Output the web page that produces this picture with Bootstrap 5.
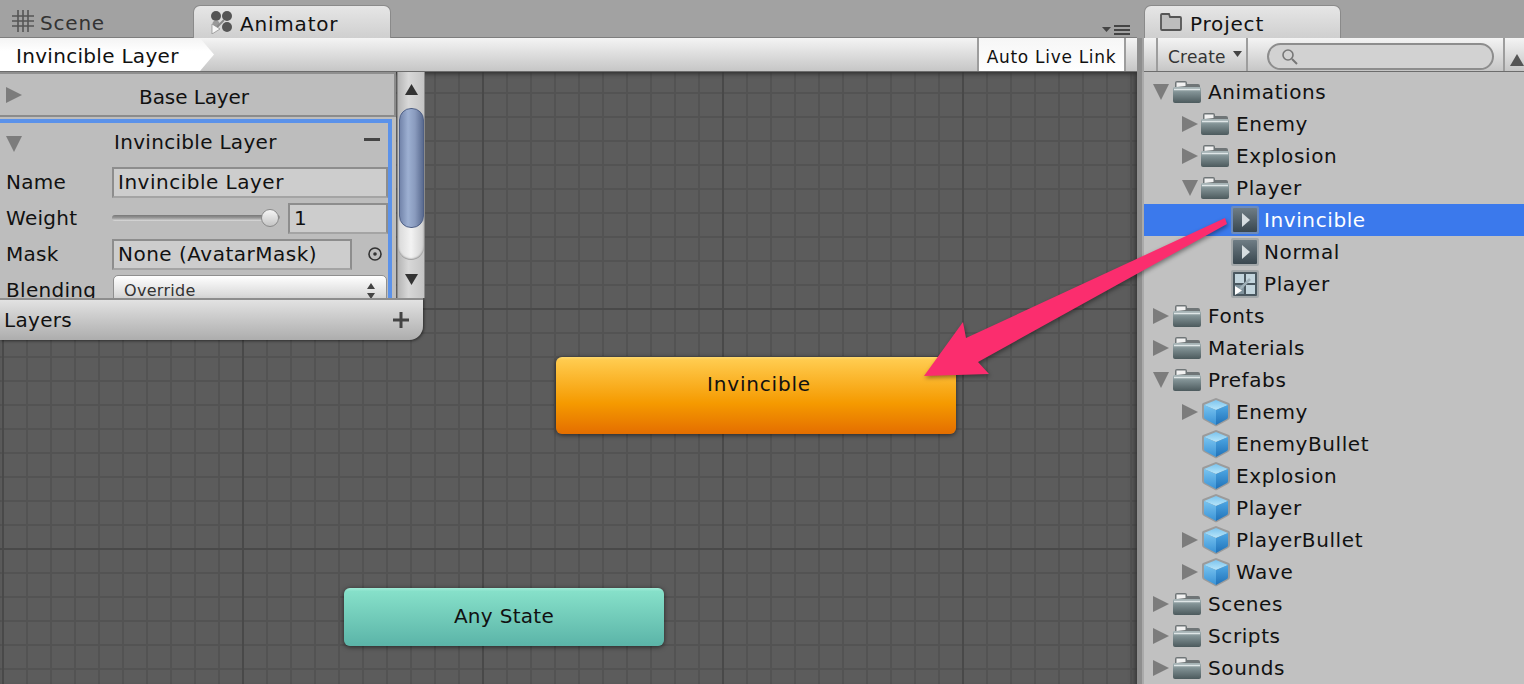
<!DOCTYPE html>
<html lang="en">
<head>
  <meta charset="UTF-8" />
  <title>Animator</title>
  <link href="https://cdn.jsdelivr.net/npm/bootstrap@5.3.0/dist/css/bootstrap.min.css" rel="stylesheet" />
  <style>
    html, body { height: 100%; margin: 0; overflow: hidden; }
    body {
      width: 1524px; height: 684px; background: #a2a2a2;
      font-family: "DejaVu Sans", "Liberation Sans", sans-serif;
      font-size: 20px; letter-spacing: .3px; color: #111; line-height: 1;
    }
    .main-pane { width: 1137px; height: 684px; }
    .gutter { width: 5px; height: 646px; margin-top: 38px; background: #8e8e8e; }
    .side-pane { width: 382px; height: 684px; }
    .tab-strip { height: 38px; padding-top: 5px; border-bottom: 1px solid #7e7e7e; }
    .side-tabs { padding-left: 2px; border-bottom: 0; }
    .tab-flat { width: 193px; padding-left: 12px; color: #333; gap: 6px; }
    .tab-on {
      height: 33px; background: linear-gradient(#e6e6e6, #cfcfcf);
      border: 1px solid #8a8a8a; border-bottom: 0; border-radius: 7px 7px 0 0;
      gap: 6px;
    }
    .tab-txt { margin-top: 3px; letter-spacing: .8px; }
    .tab-anim { width: 198px; padding-left: 16px; }
    .tab-proj { width: 197px; padding-left: 15px; gap: 8px; }
    .pane-menu { right: 7px; top: 25px; }
    .bar {
      height: 34px; background: linear-gradient(#f4f4f4, #c6c6c6);
      border-bottom: 1px solid #6c6c6c;
    }
    .crumb {
      width: 214px; height: 33px; padding: 2px 0 0 16px; background: linear-gradient(#f4f4f4, #fff 40%);
      clip-path: polygon(0 0, 200px 0, 214px 50%, 200px 100%, 0 100%);
    }
    .live-btn {
      width: 149px; height: 33px; margin-right: 11px; padding-top: 6px; font-size: 17px;
      letter-spacing: .7px; background: linear-gradient(#f6f6f6, #fff);
      border-left: 2px solid #9d9d9d; border-right: 2px solid #9d9d9d;
    }
    .canvas {
      height: 612px; position: relative; overflow: hidden;
      background-color: #5c5c5c;
      background-image:
        linear-gradient(90deg, #494949 2px, transparent 2px),
        linear-gradient(#494949 2px, transparent 2px),
        linear-gradient(90deg, #535353 2px, transparent 2px),
        linear-gradient(#535353 2px, transparent 2px);
      background-size: 240px 240px, 240px 240px, 24px 24px, 24px 24px;
      background-position: 2px 0, 0 -4px, 2px 0, 0 -4px;
      box-shadow: inset -8px 0 6px -6px #333, inset 0 5px 4px -3px #333;
    }
    .node {
      position: absolute; border-radius: 6px; box-shadow: 0 1px 5px rgba(0,0,0,.6);
    }
    .node-orange {
      left: 556px; top: 285px; width: 400px; height: 77px; padding: 0 0 24px 6px; letter-spacing: .8px;
      background: linear-gradient(#ffd96f 0, #ffcb4e 4%, #f59a00 60%, #e46e00 100%);
    }
    .node-teal {
      left: 344px; top: 516px; width: 320px; height: 58px; padding-bottom: 2px;
      background: linear-gradient(#a0ecd8 0, #86e0c9 6%, #5bb4a8 100%);
    }
    .layer-panel { position: absolute; left: 0; top: 0; width: 425px; height: 268px; }
    .layer-top { height: 226px; }
    .layer-list { width: 396px; background: #bdbdbd; }
    .base-row {
      height: 45px; padding: 4px 6px 0 0; letter-spacing: -.1px; position: relative;
      border-bottom: 2px solid #8b8b8b; border-top: 2px solid #8f8f8f;
      border-right: 2px solid #8b8b8b;
    }
    .tri-left { position: absolute; left: 6px; top: 13px; }
    .layer-open {
      height: 179px; margin-top: 2px; margin-right: 4px; overflow: hidden;
      border-top: 4px solid #5b92ea; border-right: 4px solid #5b92ea;
    }
    .layer-head { height: 41px; position: relative; padding: 0 0 4px 114px; }
    .minus-sign { position: absolute; left: 364px; top: 15px; width: 16px; height: 3px; background: #444; }
    .prop-row { height: 36px; padding-left: 6px; }
    .prop-label { width: 106px; }
    .value-box {
      height: 31px; padding-left: 4px; background: #cdcdcd;
      border: 2px solid #8d8d8d; border-bottom-color: #a4a4a4; letter-spacing: .5px;
    }
    .val-wide { width: 276px; }
    .val-num { width: 100px; margin-left: 8px; }
    .val-mask { width: 240px; }
    .slider-track {
      width: 168px; height: 6px; border-radius: 3px; position: relative;
      background: linear-gradient(#777, #999 50%, #ddd);
    }
    .slider-knob {
      position: absolute; right: 1px; top: -6px; width: 18px; height: 18px; border-radius: 50%;
      background: linear-gradient(#f5f5f5, #c4c4c4); border: 1px solid #8a8a8a;
    }
    .target-dot { margin-left: 15px; }
    .blend-label { margin-top: 8px; }
    .drop-box {
      width: 274px; height: 32px; margin: 3px 0 0 1px; padding: 0 10px; font-size: 16px; color: #333;
      background: linear-gradient(#fff, #ddd 60%, #bbb);
      border: 1px solid #8f8f8f; border-radius: 5px;
    }
    .scroll-col {
      width: 28px; margin-left: 1px; position: relative;
      background: linear-gradient(90deg, #b5b5b5, #d8d8d8 40%, #c4c4c4);
      border-left: 1px solid #8b8b8b; border-right: 1px solid #8b8b8b;
    }
    .scroll-track {
      position: absolute; left: 0; top: 36px; width: 26px; height: 152px; border-radius: 13px;
      background: linear-gradient(90deg, #d8d8d8, #f3f3f3 50%, #cfcfcf);
      box-shadow: inset 0 -1px 2px #888;
    }
    .scroll-thumb {
      position: absolute; left: 1px; top: 36px; width: 25px; height: 120px; border-radius: 12px;
      background: linear-gradient(90deg, #7385ab, #9db0d2 35%, #8a9bbe 65%, #5a6b90);
      border: 1px solid #4f6086;
    }
    .arrow-up, .arrow-down { position: absolute; left: 7px; }
    .arrow-up { top: 12px; }
    .arrow-down { top: 202px; }
    .layer-foot {
      height: 42px; width: 423px; padding: 0 14px 0 4px; border-top: 2px solid #8d8d8d;
      border-radius: 0 0 14px 0; background: linear-gradient(#e2e2e2, #adadad);
      box-shadow: 1px 1px 3px rgba(0,0,0,.5);
    }
    .side-bar { margin-left: 2px; padding-left: 12px; }
    .create-btn {
      width: 93px; height: 33px; padding: 6px 0 0 10px; gap: 7px; font-size: 17px; color: #333;
      border-left: 2px solid #9d9d9d; border-right: 2px solid #9d9d9d; letter-spacing: .2px;
    }
    .create-btn svg { margin-top: -8px; }
    .search-pill {
      width: 228px; height: 27px; margin: 4px 0 0 19px; padding-left: 12px;
      border: 2px solid #8d8d8d; border-radius: 14px; background: #d2d2d2;
    }
    .bar-end { margin-left: 9px; border-left: 2px solid #9d9d9d; height: 33px; padding: 10px 0 0 5px; }
    .tree {
      background: #c1c1c1; border-left: 2px solid #aaa; height: 612px; padding-top: 4px;
      letter-spacing: .6px;
    }
    .tree-row { height: 32px; white-space: nowrap; position: relative; }
    .tree-row svg.ico { flex: none; }
    .lvl0 { padding-left: 28px; }
    .lvl1 { padding-left: 56px; }
    .lvl1.has-cube { padding-left: 57px; }
    .lvl2 { padding-left: 87px; }
    .tree-row .lbl { margin-left: 6px; }
    .lvl2 .lbl { margin-left: 5px; }
    .has-cube .lbl { margin-left: 5px; }
    .tw { position: absolute; top: 8px; }
    .lvl0 .tw { left: 9px; }
    .lvl1 .tw { left: 38px; }
    .row-sel { background: #3b79ec; color: #fff; }
    .pink-arrow {
      position: absolute; left: 0; top: 0; pointer-events: none;
      filter: drop-shadow(1px 2px 2px rgba(0,0,0,.4));
    }
  </style>
</head>
<body>
  <svg width="0" height="0" class="position-absolute">
    <defs>
      <linearGradient id="fold-body" x1="0" y1="0" x2="0" y2="1">
        <stop offset="0" stop-color="#a9b6b8"/><stop offset=".35" stop-color="#7f8f92"/><stop offset="1" stop-color="#4c5a5d"/>
      </linearGradient>
      <linearGradient id="clip-body" x1="0" y1="0" x2="0" y2="1">
        <stop offset="0" stop-color="#6f7d85"/><stop offset="1" stop-color="#39474f"/>
      </linearGradient>
      <linearGradient id="cube-top" x1="0" y1="0" x2="0" y2="1">
        <stop offset="0" stop-color="#7cc4ee"/><stop offset="1" stop-color="#b9e6fa"/>
      </linearGradient>
      <linearGradient id="cube-left" x1="0" y1="0" x2="0" y2="1">
        <stop offset="0" stop-color="#79c4f0"/><stop offset="1" stop-color="#3a93d6"/>
      </linearGradient>
      <linearGradient id="cube-right" x1="0" y1="0" x2="0" y2="1">
        <stop offset="0" stop-color="#4da7e4"/><stop offset="1" stop-color="#2172b8"/>
      </linearGradient>
    </defs>
    <symbol id="folder" viewBox="0 0 30 24">
      <path d="M3 8 V3 Q3 1 5 1 H13 Q15 1 15 3 V4 H26 Q28 4 28 6 V8Z" fill="#6f7577"/>
      <path d="M4.500 7 V2.500 H13.500 V6 Z" fill="#f1f1f1"/>
      <path d="M1 8 Q1 7 3 7 H27 Q29 7 29 8 V21 Q29 23 27 23 H3 Q1 23 1 21Z" fill="url(#fold-body)"/>
      <path d="M2 9.500 H28" stroke="#dfe6e7" stroke-width="1.500"/>
    </symbol>
    <symbol id="cube" viewBox="0 0 30 30">
      <path d="M15 1 L28 6 Q29 6.500 29 8 V20 Q29 22 27 23 L16 29 Q15 29.500 14 29 L3 23 Q1 22 1 20 V8 Q1 6.500 2 6Z" fill="#9b9b9b"/>
      <path d="M15 3 L27 8 L15 13 L3 8Z" fill="url(#cube-top)"/>
      <path d="M3 8 L15 13 V28 L4 22 Q3 21.500 3 20Z" fill="url(#cube-left)"/>
      <path d="M27 8 L15 13 V28 L26 22 Q27 21.500 27 20Z" fill="url(#cube-right)"/>
    </symbol>
    <symbol id="clip" viewBox="0 0 28 28">
      <rect x="0" y="0" width="28" height="28" rx="2" fill="#8f979b" opacity=".6"/>
      <rect x="2" y="2" width="24" height="24" rx="1" fill="url(#clip-body)"/>
      <path d="M11 7 L19 14 L11 21Z" fill="#d6dde0"/>
    </symbol>
    <symbol id="ctrl" viewBox="0 0 28 28">
      <rect x="0" y="0" width="28" height="28" rx="2" fill="#8f979b" opacity=".6"/>
      <rect x="2" y="2" width="24" height="24" rx="1" fill="#4a5860"/>
      <rect x="4" y="4" width="9" height="9" fill="#c3d5dd"/>
      <rect x="15" y="4" width="9" height="9" fill="#c3d5dd"/>
      <rect x="15" y="15" width="9" height="9" fill="#c3d5dd"/>
      <rect x="4" y="15" width="9" height="9" fill="#7f929c"/>
      <path d="M9 19 L19 9" stroke="#9fb0b8" stroke-width="2.500"/>
      <path d="M4 16 L11 20.500 L4 25Z" fill="#fff"/>
    </symbol>
    <symbol id="tw-right" viewBox="0 0 16 16"><path d="M0 0 L16 8 L0 16Z" fill="#7c7c7c"/></symbol>
    <symbol id="tw-down" viewBox="0 0 16 16"><path d="M0 0 H16 L8 16Z" fill="#7c7c7c"/></symbol>
  </svg>

  <div class="d-flex">
    <div class="main-pane position-relative">
      <div class="tab-strip d-flex position-relative">
        <div class="tab-flat d-flex align-items-center">
          <svg width="22" height="22" viewBox="0 0 22 22"><path d="M6 0 V22 M11 0 V22 M16 0 V22 M0 6 H22 M0 11 H22 M0 16 H22" stroke="#555" stroke-width="1.600"/></svg>
          <span class="tab-txt">Scene</span>
        </div>
        <div class="tab-on tab-anim d-flex align-items-center">
          <svg width="24" height="24" viewBox="0 0 24 24">
            <circle cx="6" cy="6" r="5" fill="#555"/><circle cx="17" cy="6" r="5" fill="#555"/>
            <circle cx="17" cy="17" r="5" fill="#555"/><circle cx="6" cy="14" r="3.500" fill="#999"/>
            <path d="M6 18 L14 10" stroke="#888" stroke-width="2"/>
            <path d="M2 14 L10 19 L2 24Z" fill="#f7f7f7" stroke="#888" stroke-width=".7"/>
          </svg>
          <span class="tab-txt">Animator</span>
        </div>
        <svg class="position-absolute pane-menu" width="28" height="10" viewBox="0 0 28 10">
          <path d="M0 2 H9 L4.500 7Z" fill="#444"/><path d="M12 1 H28 M12 5 H28 M12 9 H28" stroke="#444" stroke-width="1.800"/>
        </svg>
      </div>
      <div class="bar d-flex align-items-center justify-content-between">
        <div class="crumb d-flex align-items-center">Invincible Layer</div>
        <div class="live-btn d-flex align-items-center justify-content-center">Auto Live Link</div>
      </div>
      <div class="canvas">
        <div class="node node-orange d-flex align-items-center justify-content-center"><span>Invincible</span></div>
        <div class="node node-teal d-flex align-items-center justify-content-center"><span>Any State</span></div>

        <div class="layer-panel">
          <div class="layer-top d-flex">
            <div class="layer-list">
              <div class="base-row d-flex align-items-center justify-content-center">
                <svg class="tri-left" width="16" height="16"><use href="#tw-right"/></svg>
                <span>Base Layer</span>
              </div>
              <div class="layer-open">
                <div class="layer-head d-flex align-items-center">
                  <svg class="tri-left" width="16" height="16"><use href="#tw-down"/></svg>
                  <span>Invincible Layer</span>
                  <span class="minus-sign"></span>
                </div>
                <div class="prop-row d-flex align-items-center">
                  <span class="prop-label">Name</span>
                  <div class="value-box val-wide d-flex align-items-center">Invincible Layer</div>
                </div>
                <div class="prop-row d-flex align-items-center">
                  <span class="prop-label">Weight</span>
                  <div class="slider-track"><span class="slider-knob"></span></div>
                  <div class="value-box val-num d-flex align-items-center">1</div>
                </div>
                <div class="prop-row d-flex align-items-center">
                  <span class="prop-label">Mask</span>
                  <div class="value-box val-mask d-flex align-items-center">None (AvatarMask)</div>
                  <svg class="target-dot" width="16" height="16" viewBox="0 0 16 16"><circle cx="8" cy="8" r="6" fill="none" stroke="#333" stroke-width="1.600"/><circle cx="8" cy="8" r="1.800" fill="#333"/></svg>
                </div>
                <div class="prop-row d-flex align-items-start">
                  <span class="prop-label blend-label">Blending</span>
                  <div class="drop-box d-flex align-items-center justify-content-between">
                    <span>Override</span>
                    <svg width="10" height="16" viewBox="0 0 10 16"><path d="M5 0 L9 6 H1Z M5 16 L9 10 H1Z" fill="#444"/></svg>
                  </div>
                </div>
              </div>
            </div>
            <div class="scroll-col">
              <svg class="arrow-up" width="13" height="11" viewBox="0 0 13 11"><path d="M6.500 0 L13 11 H0Z" fill="#333"/></svg>
              <span class="scroll-track"></span>
              <span class="scroll-thumb"></span>
              <svg class="arrow-down" width="13" height="11" viewBox="0 0 13 11"><path d="M0 0 H13 L6.500 11Z" fill="#333"/></svg>
            </div>
          </div>
          <div class="layer-foot d-flex align-items-center justify-content-between">
            <span>Layers</span>
            <svg width="16" height="16" viewBox="0 0 16 16"><path d="M8 0 V16 M0 8 H16" stroke="#444" stroke-width="3"/></svg>
          </div>
        </div>
      </div>
    </div>

    <div class="gutter"></div>

    <div class="side-pane">
      <div class="tab-strip side-tabs d-flex">
        <div class="tab-on tab-proj d-flex align-items-center">
          <svg width="22" height="18" viewBox="0 0 22 18"><path d="M1 16 V2 Q1 1 2 1 H9 L10 4 H20 Q21 4 21 5 V16 Q21 17 20 17 H2 Q1 17 1 16Z" fill="#bdbdbd" stroke="#555" stroke-width="1.800"/></svg>
          <span class="tab-txt">Project</span>
        </div>
      </div>
      <div class="bar side-bar d-flex align-items-center">
        <div class="create-btn d-flex align-items-center">
          <span>Create</span>
          <svg width="9" height="6" viewBox="0 0 9 6"><path d="M0 0 H9 L4.500 6Z" fill="#444"/></svg>
        </div>
        <div class="search-pill d-flex align-items-center">
          <svg width="18" height="18" viewBox="0 0 18 18"><circle cx="7" cy="7" r="5" fill="none" stroke="#777" stroke-width="1.600"/><path d="M11 11 L16 16" stroke="#777" stroke-width="2"/></svg>
        </div>
        <div class="bar-end"><svg width="14" height="12" viewBox="0 0 14 12"><path d="M7 0 L14 12 H0Z" fill="#555"/></svg></div>
      </div>
      <div class="tree">
        <div class="tree-row d-flex align-items-center lvl0"><svg class="tw" width="16" height="16"><use href="#tw-down"/></svg><svg class="ico" width="30" height="24"><use href="#folder"/></svg><span class="lbl">Animations</span></div>
        <div class="tree-row d-flex align-items-center lvl1"><svg class="tw" width="16" height="16"><use href="#tw-right"/></svg><svg class="ico" width="30" height="24"><use href="#folder"/></svg><span class="lbl">Enemy</span></div>
        <div class="tree-row d-flex align-items-center lvl1"><svg class="tw" width="16" height="16"><use href="#tw-right"/></svg><svg class="ico" width="30" height="24"><use href="#folder"/></svg><span class="lbl">Explosion</span></div>
        <div class="tree-row d-flex align-items-center lvl1"><svg class="tw" width="16" height="16"><use href="#tw-down"/></svg><svg class="ico" width="30" height="24"><use href="#folder"/></svg><span class="lbl">Player</span></div>
        <div class="tree-row d-flex align-items-center lvl2 row-sel"><svg class="ico" width="28" height="28"><use href="#clip"/></svg><span class="lbl">Invincible</span></div>
        <div class="tree-row d-flex align-items-center lvl2"><svg class="ico" width="28" height="28"><use href="#clip"/></svg><span class="lbl">Normal</span></div>
        <div class="tree-row d-flex align-items-center lvl2"><svg class="ico" width="28" height="28"><use href="#ctrl"/></svg><span class="lbl">Player</span></div>
        <div class="tree-row d-flex align-items-center lvl0"><svg class="tw" width="16" height="16"><use href="#tw-right"/></svg><svg class="ico" width="30" height="24"><use href="#folder"/></svg><span class="lbl">Fonts</span></div>
        <div class="tree-row d-flex align-items-center lvl0"><svg class="tw" width="16" height="16"><use href="#tw-right"/></svg><svg class="ico" width="30" height="24"><use href="#folder"/></svg><span class="lbl">Materials</span></div>
        <div class="tree-row d-flex align-items-center lvl0"><svg class="tw" width="16" height="16"><use href="#tw-down"/></svg><svg class="ico" width="30" height="24"><use href="#folder"/></svg><span class="lbl">Prefabs</span></div>
        <div class="tree-row d-flex align-items-center lvl1 has-cube"><svg class="tw" width="16" height="16"><use href="#tw-right"/></svg><svg class="ico" width="30" height="30"><use href="#cube"/></svg><span class="lbl">Enemy</span></div>
        <div class="tree-row d-flex align-items-center lvl1 has-cube"><svg class="ico" width="30" height="30"><use href="#cube"/></svg><span class="lbl">EnemyBullet</span></div>
        <div class="tree-row d-flex align-items-center lvl1 has-cube"><svg class="ico" width="30" height="30"><use href="#cube"/></svg><span class="lbl">Explosion</span></div>
        <div class="tree-row d-flex align-items-center lvl1 has-cube"><svg class="ico" width="30" height="30"><use href="#cube"/></svg><span class="lbl">Player</span></div>
        <div class="tree-row d-flex align-items-center lvl1 has-cube"><svg class="tw" width="16" height="16"><use href="#tw-right"/></svg><svg class="ico" width="30" height="30"><use href="#cube"/></svg><span class="lbl">PlayerBullet</span></div>
        <div class="tree-row d-flex align-items-center lvl1 has-cube"><svg class="tw" width="16" height="16"><use href="#tw-right"/></svg><svg class="ico" width="30" height="30"><use href="#cube"/></svg><span class="lbl">Wave</span></div>
        <div class="tree-row d-flex align-items-center lvl0"><svg class="tw" width="16" height="16"><use href="#tw-right"/></svg><svg class="ico" width="30" height="24"><use href="#folder"/></svg><span class="lbl">Scenes</span></div>
        <div class="tree-row d-flex align-items-center lvl0"><svg class="tw" width="16" height="16"><use href="#tw-right"/></svg><svg class="ico" width="30" height="24"><use href="#folder"/></svg><span class="lbl">Scripts</span></div>
        <div class="tree-row d-flex align-items-center lvl0"><svg class="tw" width="16" height="16"><use href="#tw-right"/></svg><svg class="ico" width="30" height="24"><use href="#folder"/></svg><span class="lbl">Sounds</span></div>
      </div>
    </div>
  </div>

  <!-- annotation arrow over the screenshot -->
  <svg class="pink-arrow" width="1524" height="684" viewBox="0 0 1524 684">
    <path d="M924 376 L963 322 L966 338 L1225 218 L1227 224 L978 362 L989 374Z" fill="#fb2d6e"/>
  </svg>

  <script src="https://cdn.jsdelivr.net/npm/bootstrap@5.3.0/dist/js/bootstrap.bundle.min.js"></script>
</body>
</html>
